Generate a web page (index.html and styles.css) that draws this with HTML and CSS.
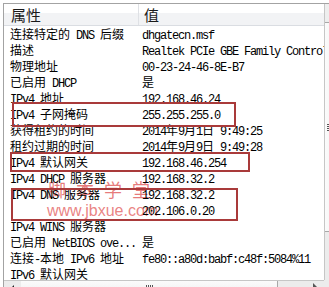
FILE: index.html
```html
<!DOCTYPE html>
<html lang="zh-CN">
<head>
<meta charset="utf-8">
<title>网络连接详细信息</title>
<link rel="stylesheet" href="styles.css">
</head>
<body>
<div class="frame">
  <div class="list">
    <div class="wm wm-cn">脚本学堂</div>
    <div class="wm wm-url">www.jbxue.com</div>

    <div class="hdr">
      <div class="hname">属性</div>
      <div class="hval">值</div>
    </div>

    <div class="row"><div class="name">连接特定的<span class="en"> DNS </span>后缀</div><div class="val"><span class="en">dhgatecn.msf</span></div></div>
    <div class="row"><div class="name">描述</div><div class="val"><span class="en">Realtek PCIe GBE Family Controller</span></div></div>
    <div class="row"><div class="name">物理地址</div><div class="val"><span class="en">00-23-24-46-8E-B7</span></div></div>
    <div class="row"><div class="name">已启用<span class="en"> DHCP</span></div><div class="val">是</div></div>
    <div class="row"><div class="name"><span class="en">IPv4 </span>地址</div><div class="val"><span class="en">192.168.46.24</span></div></div>
    <div class="row"><div class="name"><span class="en">IPv4 </span>子网掩码</div><div class="val"><span class="en">255.255.255.0</span></div></div>
    <div class="row"><div class="name">获得租约的时间</div><div class="val"><span class="en">2014</span>年<span class="en">9</span>月<span class="en">1</span>日<span class="en"> 9:49:25</span></div></div>
    <div class="row"><div class="name">租约过期的时间</div><div class="val"><span class="en">2014</span>年<span class="en">9</span>月<span class="en">9</span>日<span class="en"> 9:49:28</span></div></div>
    <div class="row"><div class="name"><span class="en">IPv4 </span>默认网关</div><div class="val"><span class="en">192.168.46.254</span></div></div>
    <div class="row"><div class="name"><span class="en">IPv4 DHCP </span>服务器</div><div class="val"><span class="en">192.168.32.2</span></div></div>
    <div class="row"><div class="name"><span class="en">IPv4 DNS </span>服务器</div><div class="val"><span class="en">192.168.32.2</span></div></div>
    <div class="row"><div class="name"></div><div class="val"><span class="en">202.106.0.20</span></div></div>
    <div class="row"><div class="name"><span class="en">IPv4 WINS </span>服务器</div><div class="val"></div></div>
    <div class="row"><div class="name">已启用<span class="en"> NetBIOS ove...</span></div><div class="val">是</div></div>
    <div class="row"><div class="name">连接<span class="en">-</span>本地<span class="en"> IPv6 </span>地址</div><div class="val"><span class="en">fe80::a80d:babf:c48f:5084%11</span></div></div>
    <div class="row"><div class="name"><span class="en">IPv6 </span>默认网关</div><div class="val"></div></div>

    <div class="mark mark-mask"></div>
    <div class="mark mark-gw"></div>
    <div class="mark mark-dns"></div>
  </div>

  <div class="vscroll">
    <div class="vbtn"></div>
    <div class="vthumb"><div class="vgrip"></div></div>
  </div>

  <div class="hscroll">
    <div class="hbtn"><span class="tri-left"></span></div>
    <div class="hthumb"><div class="hgrip"></div></div>
    <div class="htrack"></div>
    <div class="hbtn"><span class="tri-right"></span></div>
  </div>
  <div class="corner"></div>
</div>
</body>
</html>
```
FILE: styles.css
```css
html, body {
  margin: 0;
  padding: 0;
}
body {
  width: 329px;
  height: 287px;
  overflow: hidden;
  background: #ffffff;
  font-family: "Noto Sans CJK SC", sans-serif;
  font-size: 12px;
  color: #000;
}
.frame {
  margin: 3px 0 0 3px;
  border-left: 1px solid #a3a3a3;
  border-top: 1px solid #a3a3a3;
  display: grid;
  grid-template-columns: 320px 17px;
  grid-template-rows: 276px 17px;
}
.list {
  position: relative;
  overflow: hidden;
  background: #fff;
}
.hdr {
  position: relative;
  z-index: 1;
  display: grid;
  grid-template-columns: 134px 1fr;
  height: 21px;
  border-bottom: 1px solid #dadde2;
  background: linear-gradient(#ffffff 0, #ffffff 9px, #f2f3f5 9px, #f2f3f5 100%);
  font-size: 15px;
  line-height: 21px;
  color: #1a1a1a;
}
.hname {
  padding-left: 7px;
}
.hval {
  border-left: 1px solid #dfe1e5;
  padding-left: 5px;
}
.row {
  position: relative;
  z-index: 1;
  display: grid;
  grid-template-columns: 134px 186px;
  height: 16px;
  line-height: 16px;
  white-space: nowrap;
}
.name {
  padding-left: 6px;
  overflow: hidden;
}
.val {
  padding-left: 4px;
  overflow: hidden;
}
.en {
  font-family: "Liberation Mono", monospace;
  font-size: 12px;
  letter-spacing: -1.2px;
}
.wm {
  position: absolute;
  z-index: 0;
  white-space: nowrap;
}
.wm-cn {
  left: 44px;
  top: 175px;
  font-size: 18px;
  line-height: 20px;
  letter-spacing: 10px;
  color: rgba(222, 80, 80, 0.75);
}
.wm-url {
  left: 43px;
  top: 199px;
  font-family: "Liberation Sans", sans-serif;
  font-size: 16px;
  line-height: 16px;
  color: rgba(228, 100, 100, 0.8);
}
.mark {
  position: absolute;
  z-index: 2;
  box-sizing: border-box;
  border: 2px solid #a93a3a;
}
.mark-mask {
  left: 8px;
  top: 98px;
  width: 224px;
  height: 25px;
}
.mark-gw {
  left: 6px;
  top: 148px;
  width: 240px;
  height: 20px;
}
.mark-dns {
  left: 7px;
  top: 184px;
  width: 227px;
  height: 33px;
}
.vscroll {
  border-left: 1px solid #c6c6c6;
  background: #ececec;
}
.vbtn {
  height: 17px;
  background: #eeeeee;
}
.vthumb {
  margin-top: 1px;
  height: 208px;
  border-top: 1px solid #a8a8a8;
  border-bottom: 1px solid #a8a8a8;
  background: linear-gradient(to right, #fbfbfb, #eeeeee);
  display: flex;
  align-items: center;
}
.vgrip {
  margin-left: 2px;
  width: 7px;
  height: 7px;
  background: repeating-linear-gradient(#555 0, #555 1px, transparent 1px, transparent 2px);
}
.hscroll {
  display: flex;
  border-top: 1px solid #c6c6c6;
  background: #ececec;
}
.hbtn {
  flex: 0 0 17px;
  position: relative;
}
.tri-left {
  position: absolute;
  left: 6px;
  top: 4px;
  border-top: 4px solid transparent;
  border-bottom: 4px solid transparent;
  border-right: 4px solid #222;
}
.tri-right {
  position: absolute;
  left: 6px;
  top: 2px;
  border-top: 4px solid transparent;
  border-bottom: 4px solid transparent;
  border-left: 4px solid #555;
}
.hthumb {
  flex: 0 0 256px;
  border-right: 1px solid #a8a8a8;
  background: linear-gradient(#fbfbfb, #eeeeee);
  display: flex;
  justify-content: center;
  align-items: flex-start;
}
.hgrip {
  margin-top: 4px;
  width: 7px;
  height: 7px;
  background: repeating-linear-gradient(to right, #555 0, #555 1px, transparent 1px, transparent 2px);
}
.htrack {
  flex: 1;
}
.corner {
  background: #ececec;
}
```
